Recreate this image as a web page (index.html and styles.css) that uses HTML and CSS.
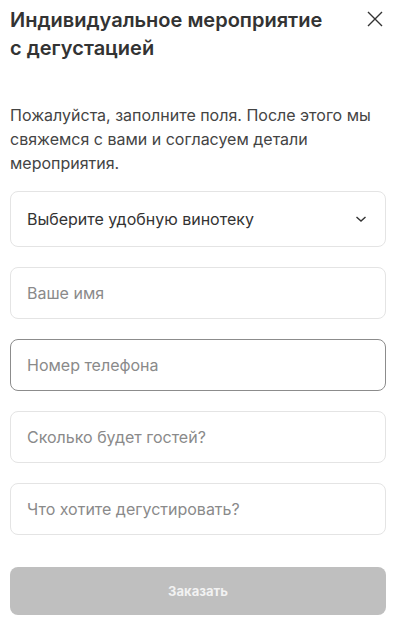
FILE: index.html
```html
<!DOCTYPE html>
<html lang="ru">
<head>
    <meta charset="UTF-8">
    <meta name="viewport" content="width=device-width, initial-scale=1.0">
    <title>Индивидуальное мероприятие с дегустацией</title>
    <link rel="stylesheet" href="styles.css">
</head>
<body>
    <div class="modal">
        <div class="modal-header">
            <h2 class="title">Индивидуальное мероприятие с&nbsp;дегустацией</h2>
            <button class="close" aria-label="Закрыть">
                <svg width="16" height="16" viewBox="0 0 16 16" fill="none" stroke="#333" stroke-width="1.4">
                    <path d="M1 1L15 15M15 1L1 15"/>
                </svg>
            </button>
        </div>
        <p class="desc">Пожалуйста, заполните поля. После этого мы свяжемся с вами и согласуем детали мероприятия.</p>
        <form class="form">
            <div class="field select">
                <span>Выберите удобную винотеку</span>
                <svg width="12" height="8" viewBox="0 0 12 8" fill="none" stroke="#333" stroke-width="1.4">
                    <path d="M1.5 2L6 6L10.5 2"/>
                </svg>
            </div>
            <input class="field" type="text" placeholder="Ваше имя">
            <input class="field active" type="tel" placeholder="Номер телефона">
            <input class="field" type="text" placeholder="Сколько будет гостей?">
            <input class="field" type="text" placeholder="Что хотите дегустировать?">
            <button class="submit" type="button" disabled>Заказать</button>
        </form>
    </div>
</body>
</html>
```

FILE: styles.css
```css
* {
    margin: 0;
    padding: 0;
    box-sizing: border-box;
    font-family: Inter, "Noto Sans", sans-serif;
}
body {
    background: white;
    color: #333;
}
.modal {
    padding: 6px 16px 10px 10px;
}
.modal-header {
    display: flex;
    justify-content: space-between;
    align-items: flex-start;
}
.title {
    font-size: 20px;
    line-height: 28px;
    font-weight: 600;
    color: #333;
    max-width: 330px;
}
.close {
    border: none;
    background: none;
    padding: 0;
    margin-top: 5px;
    margin-right: 3px;
    width: 16px;
    height: 16px;
    cursor: pointer;
}
.desc {
    margin-top: 41px;
    font-size: 16px;
    line-height: 24px;
    color: #444;
}
.form {
    margin-top: 16px;
    display: flex;
    flex-direction: column;
    gap: 20px;
}
.field {
    width: 100%;
    height: 52px;
    padding: 0 16px;
    border: 1px solid #e4e4e4;
    border-radius: 8px;
    font-size: 16px;
    color: #333;
    background: white;
    outline: none;
}
.field::placeholder {
    color: #8a8a8a;
}
.field.active {
    border-color: #8c8c8c;
}
.select {
    height: 56px;
    display: flex;
    align-items: center;
    justify-content: space-between;
    padding-right: 18px;
}
.submit {
    margin-top: 12px;
    height: 48px;
    border: none;
    border-radius: 8px;
    background: #bfbfbf;
    color: #f2f2f2;
    font-size: 13px;
    font-weight: 700;
}
```
